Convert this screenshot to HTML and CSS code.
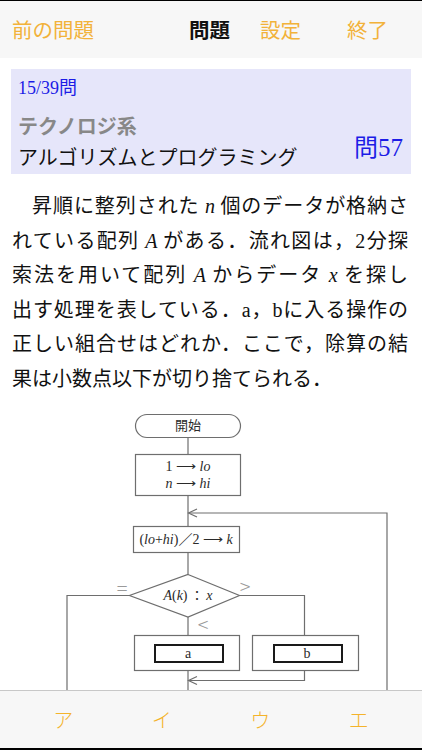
FILE: index.html
```html
<!DOCTYPE html>
<html lang="ja">
<head>
<meta charset="utf-8">
<link rel="stylesheet" href="styles.css">
</head>
<body>
<div class="page">
  <nav class="navbar">
    <span class="nav-item nav-prev">前の問題</span>
    <span class="nav-item nav-title">問題</span>
    <span class="nav-item nav-settings">設定</span>
    <span class="nav-item nav-end">終了</span>
  </nav>

  <section class="header-box">
    <div class="header-left">
      <div class="count">15/39問</div>
      <div class="category">テクノロジ系</div>
      <div class="topic">アルゴリズムとプログラミング</div>
    </div>
    <div class="qnum">問<span class="serif">57</span></div>
  </section>

  <section class="question">
    <div class="qline first">昇順に整列された <i class="var">n</i> 個のデータが格納さ</div>
    <div class="qline">れている配列 <i class="var">A</i> がある．流れ図は，<span class="serif">2</span>分探</div>
    <div class="qline">索法を用いて配列 <i class="var">A</i> からデータ <i class="var">x</i> を探し</div>
    <div class="qline">出す処理を表している．<span class="serif">a</span>，<span class="serif">b</span>に入る操作の</div>
    <div class="qline">正しい組合せはどれか．ここで，除算の結</div>
    <div class="qline last">果は小数点以下が切り捨てられる．</div>
  </section>

  <section class="flow">
    <svg class="flow-svg" width="422" height="300" viewBox="0 0 422 300" xmlns="http://www.w3.org/2000/svg">
      <g fill="none" stroke="#6e6e6e" stroke-width="1.2">
        <rect x="135.5" y="14.5" width="105" height="23" rx="11.5"/>
        <line x1="188" y1="37.5" x2="188" y2="54.5"/>
        <rect x="135.5" y="54.5" width="105" height="41"/>
        <line x1="188" y1="95.5" x2="188" y2="126.5"/>
        <polyline points="387,300 387,113 188.5,113"/>
        <polyline points="197,109 188.5,113 197,117"/>
        <rect x="133.5" y="126.5" width="106" height="26"/>
        <line x1="188" y1="152.5" x2="188" y2="174.5"/>
        <polygon points="188,174.5 239.5,195.5 188,217 129.5,195.5"/>
        <polyline points="129.5,195.5 67,195.5 67,300"/>
        <polyline points="239.5,195.5 304.5,195.5 304.5,235.5"/>
        <line x1="188" y1="217" x2="188" y2="235.5"/>
        <rect x="134.5" y="235.5" width="105" height="35"/>
        <rect x="252.5" y="235.5" width="106" height="35"/>
        <line x1="188" y1="270.5" x2="188" y2="300"/>
        <polyline points="304.5,270.5 304.5,280.5 188.5,280.5"/>
        <polyline points="197,276.5 188.5,280.5 197,284.5"/>
      </g>
      <g fill="none" stroke="#1a1a1a" stroke-width="2">
        <rect x="155" y="245" width="68" height="17"/>
        <rect x="274" y="245" width="68" height="17"/>
      </g>
      <g class="fc-text" fill="#2a2a2a" text-anchor="middle">
        <text x="188" y="30" class="fc-jp">開始</text>
        <text x="188" y="71"><tspan>1 ⟶ </tspan><tspan class="fc-it">lo</tspan></text>
        <text x="188" y="88"><tspan class="fc-it">n</tspan><tspan> ⟶ </tspan><tspan class="fc-it">hi</tspan></text>
        <text x="186" y="144">(<tspan class="fc-it">lo</tspan>+<tspan class="fc-it">hi</tspan>)／2 ⟶ <tspan class="fc-it">k</tspan></text>
        <text x="188" y="200"><tspan class="fc-it">A</tspan>(<tspan class="fc-it">k</tspan>)<tspan class="fc-jp"> ： </tspan><tspan class="fc-it">x</tspan></text>
        <text x="188" y="258">a</text>
        <text x="307" y="258">b</text>
      </g>
      <g class="fc-label" fill="#9a9a9a" text-anchor="middle">
        <text x="122" y="196">=</text>
        <text x="245" y="194">&gt;</text>
        <text x="203" y="232">&lt;</text>
      </g>
    </svg>
  </section>

  <footer class="tabbar">
    <span class="tab">ア</span>
    <span class="tab">イ</span>
    <span class="tab">ウ</span>
    <span class="tab">エ</span>
  </footer>
</div>
</body>
</html>
```

FILE: styles.css
```css
* {
  box-sizing: border-box;
}

html, body {
  margin: 0;
  padding: 0;
  background: #ffffff;
}

body {
  font-family: "Noto Sans CJK JP", "Noto Sans", sans-serif;
  color: #111;
  width: 422px;
  height: 750px;
  overflow: hidden;
}

.page {
  border-top: 1px solid #000;
  height: 750px;
  overflow: hidden;
}

.serif {
  font-family: "Liberation Serif", "Noto Sans CJK JP", serif;
}

/* Navigation bar */
.navbar {
  height: 57px;
  background: #f7f7f7;
  display: flex;
  align-items: center;
  padding-left: 12px;
}

.nav-item {
  font-size: 20.5px;
  line-height: 1;
  color: #f2b23a;
  white-space: nowrap;
}

.nav-title {
  color: #111;
  font-weight: 700;
  margin-left: 95px;
}

.nav-settings {
  margin-left: 30px;
}

.nav-end {
  margin-left: 46px;
}

/* Header box */
.header-box {
  margin: 11px 11px 0 11px;
  height: 105px;
  background: #e6e6fa;
  display: flex;
  justify-content: space-between;
  align-items: flex-end;
  padding: 7px 8px 3px 7px;
}

.header-left {
  display: flex;
  flex-direction: column;
}

.count {
  font-family: "Liberation Serif", "Noto Sans CJK JP", serif;
  font-size: 18px;
  line-height: 24px;
  color: #1c1ce6;
}

.category {
  margin-top: 12px;
  font-size: 20px;
  line-height: 28px;
  font-weight: 700;
  color: #888;
}

.topic {
  margin-top: 3px;
  font-size: 20px;
  line-height: 28px;
  color: #111;
}

.qnum {
  font-size: 24px;
  line-height: 30px;
  color: #1c1ce6;
  margin-bottom: 8px;
}

.qnum .serif {
  font-size: 25px;
}

/* Question text */
.question {
  margin-top: 14px;
  padding: 0 14px 0 12px;
}

.qline {
  font-size: 20px;
  line-height: 34.5px;
  height: 34.5px;
  white-space: nowrap;
  text-align: justify;
  text-align-last: justify;
  color: #111;
}

.qline.first {
  text-indent: 20px;
}

.qline.last {
  text-align-last: left;
}

.var {
  font-family: "Liberation Serif", serif;
  font-style: italic;
  font-size: 20px;
}

/* Flowchart */
.flow {
  margin-top: 5px;
  height: 300px;
}

.flow-svg {
  display: block;
}

.fc-text {
  font-family: "Liberation Serif", "Noto Sans CJK JP", serif;
  font-size: 14px;
}

.fc-it {
  font-style: italic;
}

.fc-jp {
  font-family: "Noto Sans CJK JP", sans-serif;
  font-size: 13px;
}

.fc-label {
  font-family: "Noto Sans CJK JP", sans-serif;
  font-size: 20px;
  font-weight: 300;
}

/* Bottom tab bar */
.tabbar {
  position: fixed;
  left: 0;
  bottom: 0;
  width: 422px;
  height: 60px;
  background: #f7f7f7;
  border-top: 1px solid #c8c8c8;
  border-bottom: 2px solid #000;
  display: grid;
  grid-template-columns: repeat(4, 1fr);
  align-items: center;
  padding: 0 14px;
}

.tab {
  text-align: center;
  font-size: 20px;
  line-height: 1;
  color: #f4b32b;
  font-weight: 300;
}
```
